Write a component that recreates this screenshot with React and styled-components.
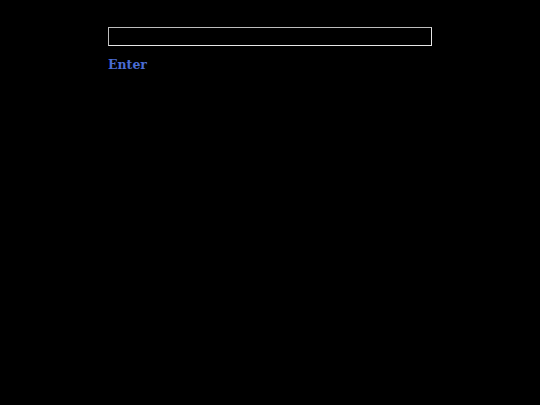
import React from "react";
import styled, { createGlobalStyle } from "styled-components";

const GlobalStyle = createGlobalStyle`
  html, body {
    margin: 0;
    padding: 0;
    background: #000;
    height: 100%;
  }
  #root {
    min-height: 100%;
  }
`;

const Page = styled.div`
  display: flex;
  flex-direction: column;
  align-items: center;
  padding-top: 27px;
  min-height: 405px;
  box-sizing: border-box;
  background: #000;
`;

const Form = styled.form`
  width: 324px;
  display: flex;
  flex-direction: column;
  align-items: flex-start;
  gap: 11px;
`;

const Field = styled.input`
  width: 100%;
  height: 19px;
  box-sizing: border-box;
  background: #000;
  color: #fff;
  border: 1px solid #e6e6e6;
  border-top-color: #bdbdbd;
  border-left-color: #bdbdbd;
  outline: none;
  padding: 0 4px;
  font-family: "DejaVu Sans", sans-serif;
  font-size: 12px;
`;

const EnterLink = styled.a`
  font-family: "DejaVu Serif", serif;
  font-weight: bold;
  font-size: 12.5px;
  line-height: 16px;
  color: #4a6cd4;
  text-decoration: none;
  cursor: pointer;
`;

export default function App() {
  return (
    <>
      <GlobalStyle />
      <Page>
        <Form onSubmit={(e) => e.preventDefault()}>
          <Field type="text" />
          <EnterLink>Enter</EnterLink>
        </Form>
      </Page>
    </>
  );
}
